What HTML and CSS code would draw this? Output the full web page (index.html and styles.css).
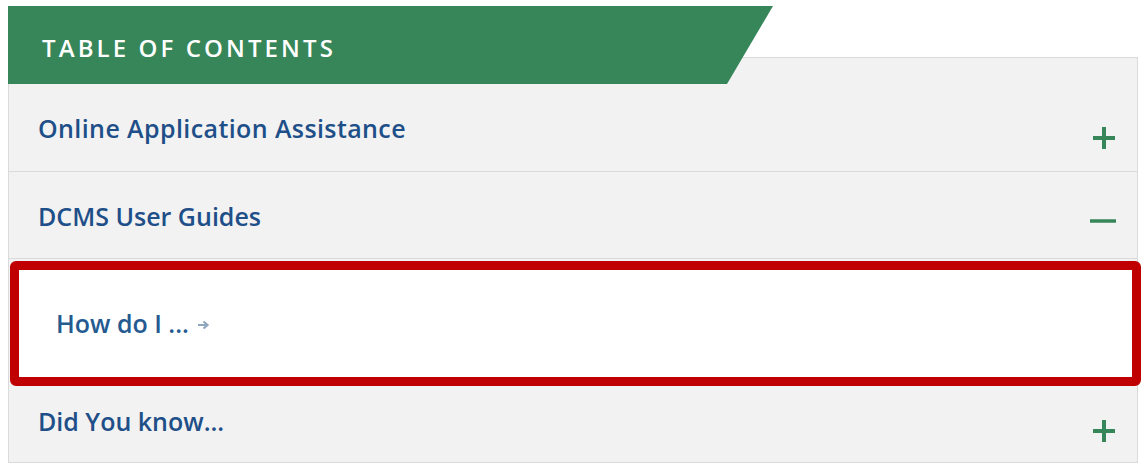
FILE: index.html
```html
<!DOCTYPE html>
<html lang="en">
<head>
<meta charset="utf-8">
<title>Table of Contents</title>
<link rel="stylesheet" href="styles.css">
</head>
<body>
<div class="toc">
  <div class="toc-header"><span class="toc-title">TABLE OF CONTENTS</span></div>
  <div class="panel">
    <div class="row row-first">
      <span class="row-title">Online Application Assistance</span>
      <svg class="icon icon-plus" width="24" height="24" viewBox="0 0 24 24"><path d="M12 1v22M1 12h22" stroke="#37865a" stroke-width="4"/></svg>
    </div>
    <div class="row row-second">
      <span class="row-title">DCMS User Guides</span>
      <svg class="icon icon-minus" width="26" height="24" viewBox="0 0 26 24"><path d="M0 12h26" stroke="#37865a" stroke-width="3.5"/></svg>
    </div>
    <div class="sub">
      <a class="sub-link" href="#">How do I ...<svg class="arrow" width="13" height="10" viewBox="0 0 13 10"><path d="M1 5h9M6.5 1.5 10.5 5 6.5 8.5" fill="none" stroke="#8ea6be" stroke-width="2.2"/></svg></a>
    </div>
    <div class="row row-last">
      <span class="row-title">Did You know...</span>
      <svg class="icon icon-plus" width="24" height="24" viewBox="0 0 24 24"><path d="M12 1v22M1 12h22" stroke="#37865a" stroke-width="4"/></svg>
    </div>
  </div>
</div>
</body>
</html>
```

FILE: styles.css
```css
html, body {
  margin: 0;
  padding: 0;
  background: #ffffff;
}

body {
  font-family: "Open Sans", "Noto Sans", "Liberation Sans", sans-serif;
}

.toc {
  margin: 6px 0 0 8px;
  width: 1130px;
}

.toc-header {
  position: relative;
  z-index: 1;
  width: 765px;
  height: 78px;
  margin-bottom: -27px;
  background: #37865a;
  clip-path: polygon(0 0, 100% 0, calc(100% - 46px) 100%, 0 100%);
  box-sizing: border-box;
  padding: 27px 0 0 34px;
}

.toc-title {
  color: #ffffff;
  font-size: 24px;
  font-weight: 600;
  letter-spacing: 3.1px;
  line-height: 30px;
}

.panel {
  background: #f2f2f2;
  border: 1px solid #dadada;
}

.row {
  display: flex;
  justify-content: space-between;
  align-items: center;
  padding: 0 21px 0 29px;
  border-bottom: 1px solid #dadada;
}

.row-first {
  padding-top: 53px;
  padding-bottom: 26px;
}

.row-second {
  padding-top: 27px;
  padding-bottom: 25px;
}

.row-last {
  padding-top: 18px;
  padding-bottom: 24px;
  border-bottom: none;
}

.row-title {
  color: #1e4f88;
  font-size: 25px;
  font-weight: 600;
  line-height: 34px;
}

.row-first .row-title {
  letter-spacing: 0.4px;
}

.icon {
  display: block;
}

.row-first .icon,
.row-last .icon {
  transform: translateY(10px);
}

.row-second .icon {
  transform: translateY(5px);
}

.sub {
  margin: 2px -4px 0 1px;
  background: #ffffff;
  border: 9px solid #c00000;
  border-radius: 6px;
  padding: 36px 0 37px 37px;
}

.sub-link {
  color: #245a90;
  font-size: 25px;
  font-weight: 600;
  line-height: 34px;
  text-decoration: none;
  display: inline-flex;
  align-items: center;
}

.arrow {
  margin-left: 8px;
  margin-top: 4px;
}
```
